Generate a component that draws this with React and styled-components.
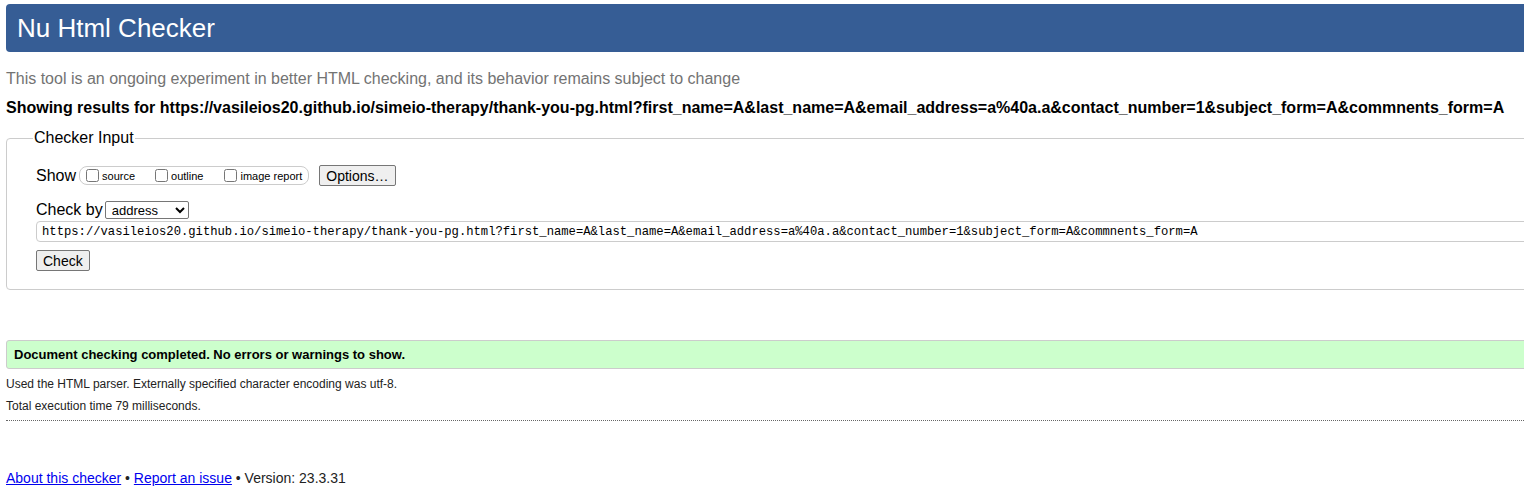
import React from "react";
import styled, { createGlobalStyle } from "styled-components";

const GlobalStyle = createGlobalStyle`
  html, body {
    margin: 0;
    padding: 0;
    overflow: hidden;
    background: #fff;
  }
  body {
    font-family: "Liberation Sans", Arial, sans-serif;
    color: #000;
  }
`;

const Page = styled.div`
  width: 1560px;
  padding: 4px 0 0 6px;
  box-sizing: border-box;
`;

const Header = styled.h1`
  margin: 0;
  height: 48px;
  display: flex;
  align-items: center;
  padding-left: 11px;
  background: #365d95;
  color: #fff;
  font-size: 26px;
  font-weight: normal;
  border-radius: 4px 0 0 4px;
`;

const Tagline = styled.p`
  margin: 18px 0 0;
  font-size: 16px;
  line-height: 18px;
  color: #737373;
`;

const Results = styled.h2`
  margin: 11px 0 0;
  font-size: 16px;
  line-height: 18px;
  font-weight: bold;
`;

const Fieldset = styled.fieldset`
  margin: 12px 0 0;
  padding: 10px 0 18px 29px;
  border: 1px solid #cccccc;
  border-radius: 4px;
`;

const Legend = styled.legend`
  margin-left: -3px;
  padding: 0 1px;
  font-size: 16px;
  line-height: 18px;
`;

const Row = styled.div`
  display: flex;
  align-items: center;
  font-size: 16px;
  margin-top: ${(p) => p.$top || 0}px;
`;

const RowLabel = styled.span`
  margin-right: ${(p) => p.$gap || 3}px;
`;

const OptionGroup = styled.div`
  display: flex;
  align-items: center;
  height: 17px;
  padding: 0 6px 0 6px;
  border: 1px solid #cccccc;
  border-radius: 8px;
`;

const Option = styled.label`
  display: flex;
  align-items: center;
  font-size: 11px;
  margin-right: ${(p) => p.$gap || 0}px;
`;

const Box = styled.input`
  width: 13px;
  height: 13px;
  margin: 0 3px 0 0;
`;

const Button = styled.button`
  font-family: "Liberation Sans", Arial, sans-serif;
  font-size: 14px;
  height: 21px;
  padding: 0 6px;
  color: #000;
  background: #efefef;
  border: 1px solid #767676;
  border-radius: 2px;
  margin-left: ${(p) => p.$left || 0}px;
`;

const Select = styled.select`
  font-family: "Liberation Sans", Arial, sans-serif;
  font-size: 13px;
  width: 84px;
  height: 18px;
  padding: 0 2px;
  border: 1px solid #767676;
  border-radius: 2px;
  background: #fff;
  color: #000;
`;

const UrlInput = styled.input`
  display: block;
  box-sizing: border-box;
  width: 1500px;
  height: 21px;
  margin-top: 2px;
  padding: 0 5px;
  font-family: "Liberation Mono", "DejaVu Sans Mono", monospace;
  font-size: 12.2px;
  color: #000;
  border: 1px solid #cccccc;
  border-radius: 4px;
`;

const Success = styled.div`
  margin-top: 50px;
  height: 29px;
  box-sizing: border-box;
  display: flex;
  align-items: center;
  padding-left: 7px;
  background: #ccffcc;
  border: 1px solid #cccccc;
  border-radius: 3px 0 0 3px;
  font-size: 13px;
  font-weight: bold;
`;

const Note = styled.p`
  margin: ${(p) => p.$top}px 0 0;
  font-size: 12px;
  line-height: 14px;
  color: #222;
`;

const Divider = styled.hr`
  margin: 7px 0 0;
  border: 0;
  border-top: 1px dotted #666;
`;

const Footer = styled.p`
  margin: 49px 0 0;
  font-size: 14px;
  line-height: 16px;
  color: #222;
`;

const Link = styled.a`
  color: #0000ee;
  text-decoration: underline;
`;

export default function App() {
  const url =
    "https://vasileios20.github.io/simeio-therapy/thank-you-pg.html?first_name=A&last_name=A&email_address=a%40a.a&contact_number=1&subject_form=A&commnents_form=A";
  return (
    <Page>
      <GlobalStyle />
      <Header>Nu Html Checker</Header>
      <Tagline>
        This tool is an ongoing experiment in better HTML checking, and its
        behavior remains subject to change
      </Tagline>
      <Results>Showing results for {url}</Results>
      <Fieldset>
        <Legend>Checker Input</Legend>
        <Row $top={8}>
          <RowLabel>Show</RowLabel>
          <OptionGroup>
            <Option $gap={20}>
              <Box type="checkbox" />
              source
            </Option>
            <Option $gap={21}>
              <Box type="checkbox" />
              outline
            </Option>
            <Option>
              <Box type="checkbox" />
              image report
            </Option>
          </OptionGroup>
          <Button $left={10}>Options…</Button>
        </Row>
        <Row $top={15}>
          <RowLabel $gap={2}>Check by</RowLabel>
          <Select defaultValue="address">
            <option value="address">address</option>
            <option value="file">file upload</option>
            <option value="text">text input</option>
          </Select>
        </Row>
        <UrlInput defaultValue={url} readOnly />
        <Row $top={8}>
          <Button>Check</Button>
        </Row>
      </Fieldset>
      <Success>Document checking completed. No errors or warnings to show.</Success>
      <Note $top={8}>
        Used the HTML parser. Externally specified character encoding was utf-8.
      </Note>
      <Note $top={8}>Total execution time 79 milliseconds.</Note>
      <Divider />
      <Footer>
        <Link href="#">About this checker</Link> •{" "}
        <Link href="#">Report an issue</Link> • Version: 23.3.31
      </Footer>
    </Page>
  );
}
